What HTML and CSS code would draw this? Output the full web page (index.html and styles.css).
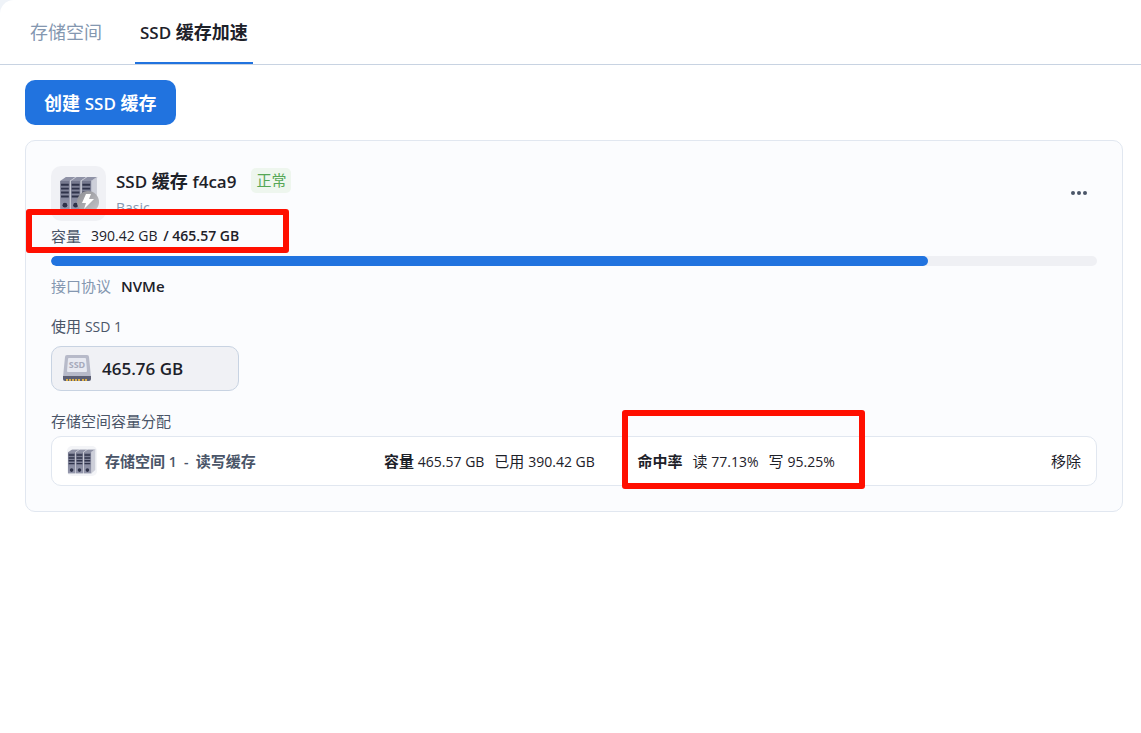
FILE: index.html
```html
<!DOCTYPE html>
<html lang="zh-CN">
<head>
    <meta charset="UTF-8">
    <meta name="viewport" content="width=device-width, initial-scale=1.0">
    <title>SSD 缓存加速</title>
    <link rel="stylesheet" href="styles.css">
</head>
<body>

<!-- shared server drawing -->
<svg class="defs" width="0" height="0" aria-hidden="true">
    <defs>
        <linearGradient id="front" x1="0" y1="0" x2="0" y2="1">
            <stop offset="0" stop-color="#75788e"/>
            <stop offset="1" stop-color="#9497ac"/>
        </linearGradient>
        <linearGradient id="flash" x1="0" y1="0" x2="1" y2="1">
            <stop offset="0" stop-color="#8e8e93"/>
            <stop offset="1" stop-color="#c6c6ca"/>
        </linearGradient>
        <symbol id="tower" viewBox="0 0 17 34">
            <path d="M0 4L6 0H16L10 4Z" fill="#8f92a6"/>
            <path d="M10 4L16 0H17L11 4V34H10Z" fill="#c3c5d1"/>
            <path d="M0 4H10V34H0Z" fill="url(#front)"/>
            <path d="M1 8H9M1 12H9M1 16H9M1 20H9" stroke="#2f334a" stroke-width="2"/>
            <circle cx="5" cy="29" r="2.500" fill="#2f334a"/>
        </symbol>
        <symbol id="server" viewBox="0 0 39 34">
            <path d="M32 4L38 0V29L32 34Z" fill="#cdcfd9"/>
            <use href="#tower" x="0" y="0" width="17" height="34"/>
            <use href="#tower" x="11" y="0" width="17" height="34"/>
            <use href="#tower" x="22" y="0" width="17" height="34"/>
        </symbol>
    </defs>
</svg>

<div class="panel">
    <nav class="tabs">
        <a class="tab" href="#storage">存储空间</a>
        <a class="tab active" href="#cache"><span class="latin">SSD</span> 缓存加速</a>
    </nav>

    <main class="content">
        <button class="create" type="button">创建 <span class="latin">SSD</span> 缓存</button>

        <section class="card">
            <div class="head">
                <div class="cache-icon">
                    <svg viewBox="0 0 55 55" aria-hidden="true">
                        <use href="#server" x="9" y="11" width="38" height="33"/>
                        <circle cx="37" cy="36" r="11" fill="url(#flash)"/>
                        <path d="M35 28H40L38 33H43L33 43L35 37H31Z" fill="#fff"/>
                    </svg>
                </div>
                <div class="head-text">
                    <div class="title-line">
                        <h2><span class="latin">SSD</span> 缓存 <span class="latin">f4ca9</span></h2>
                        <span class="status">正常</span>
                    </div>
                    <p class="mode">Basic</p>
                </div>
                <button class="more" type="button" aria-label="更多">
                    <svg viewBox="0 0 16 4" width="16" height="4" aria-hidden="true">
                        <circle cx="2" cy="2" r="2"/>
                        <circle cx="8" cy="2" r="2"/>
                        <circle cx="14" cy="2" r="2"/>
                    </svg>
                </button>
            </div>

            <div class="capacity">
                <label for="usage">容量</label>
                <span class="num">390.42 GB <b class="total">/ 465.57 GB</b></span>
                <span class="mark mark-capacity"></span>
            </div>
            <progress id="usage" value="390.42" max="465.57"></progress>

            <div class="protocol">
                <span class="muted">接口协议</span>
                <b>NVMe</b>
            </div>

            <h3 class="label">使用 <span class="num">SSD 1</span></h3>
            <div class="disk">
                <svg viewBox="0 0 28 28" width="28" height="28" aria-hidden="true">
                    <path d="M4 0H24Q26 0 26 2L28 22H0L2 2Q2 0 4 0Z" fill="#b7bac9"/>
                    <path d="M0 21H28V24Q28 26 26 26H2Q0 26 0 24Z" fill="#5c5f74"/>
                    <path d="M6 3H22Q23 3 23 4L24 16Q24 17 23 17H5Q4 17 4 16L5 4Q5 3 6 3Z" fill="#e7e9f1"/>
                    <path d="M3 25H17M19 25H25" stroke="#e0b24a" stroke-width="2" stroke-dasharray="2 1"/>
                    <text x="14" y="13" text-anchor="middle" class="disk-text">SSD</text>
                </svg>
                <b>465.76 GB</b>
            </div>

            <h3 class="label">存储空间容量分配</h3>
            <div class="volume">
                <div class="volume-name">
                    <span class="volume-icon">
                        <svg viewBox="0 0 39 34" width="28" height="25" aria-hidden="true"><use href="#server"/></svg>
                    </span>
                    <b>存储空间<span class="num"> 1&nbsp; -&nbsp; </span>读写缓存</b>
                </div>
                <div class="stats">
                    <span><b>容量</b> <span class="num">465.57 GB</span></span>
                    <span>已用 <span class="num">390.42 GB</span></span>
                </div>
                <div class="stats">
                    <b>命中率</b>
                    <span>读 <span class="num">77.13%</span></span>
                    <span>写 <span class="num">95.25%</span></span>
                    <span class="mark mark-hit"></span>
                </div>
                <button class="remove" type="button">移除</button>
            </div>
        </section>
    </main>
</div>

</body>
</html>
```

FILE: styles.css
```css
* {
    box-sizing: border-box;
}
body {
    margin: 0;
    background: #eff3f8;
    color: #1d2129;
    font-family: "Open Sans", "Noto Sans CJK SC", sans-serif;
    font-size: 15px;
    line-height: 20px;
}
h2, h3, p {
    margin: 0;
}
b {
    font-weight: 600;
}
button {
    font: inherit;
    border: 0;
    cursor: pointer;
}
.defs {
    position: absolute;
}
.panel {
    min-height: 100vh;
    background: #fff;
    border-top-left-radius: 14px;
}

/* latin text and digits run a size smaller than the Chinese around them */
.num {
    font-size: 14px;
}
.latin {
    font-size: 17px;
}
.label .num, .stats .num, .volume-name .num, .latin {
    line-height: 1;
}

/* tabs */
.tabs {
    display: flex;
    gap: 28px;
    padding: 0 25px;
    border-bottom: 1px solid #c8d3e2;
}
.tab {
    padding: 20px 5px 18px;
    border-bottom: 2px solid transparent;
    font-size: 18px;
    line-height: 24px;
    color: #8497b0;
    text-decoration: none;
}
.tab.active {
    border-color: #2173df;
    color: #1d2129;
    font-weight: 600;
}

.content {
    padding: 15px 18px 25px 25px;
}
.create {
    display: block;
    height: 45px;
    padding: 0 19px;
    border-radius: 10px;
    background: #2173df;
    color: #fff;
    font-size: 18px;
    font-weight: 600;
}

/* cache card */
.card {
    margin-top: 15px;
    padding: 25px;
    border: 1px solid #e1e7f0;
    border-radius: 10px;
    background: #fbfcfe;
}
.head {
    display: flex;
    gap: 10px;
}
.cache-icon {
    width: 55px;
    height: 55px;
    border-radius: 10px;
    background: #f0f1f5;
}
.head-text {
    flex: 1;
    padding-top: 2px;
}
.title-line {
    display: flex;
    align-items: center;
    gap: 15px;
}
.title-line h2 {
    font-size: 18px;
    font-weight: 600;
}
.status {
    padding: 2px 5px;
    border-radius: 5px;
    background: #eef6ee;
    color: #55a755;
    line-height: 21px;
}
.mode {
    margin-top: 5px;
    color: #8497b0;
    font-size: 14px;
}
.more {
    align-self: flex-start;
    margin-top: 15px;
    padding: 10px;
    background: none;
    line-height: 0;
    fill: #4a5568;
}
.more svg {
    display: block;
}
.capacity, .protocol {
    position: relative;
    display: flex;
    gap: 10px;
}
.capacity {
    margin-top: 5px;
}
.capacity label, .label {
    color: #4a5568;
}
.total {
    margin-left: 2px;
}
.muted {
    color: #8497b0;
}
progress {
    display: block;
    appearance: none;
    width: 100%;
    height: 10px;
    margin: 10px 0;
    border: 0;
    border-radius: 5px;
    background: #eff0f4;
    overflow: hidden;
}
progress::-webkit-progress-bar {
    background: #eff0f4;
}
progress::-webkit-progress-value {
    border-radius: 5px;
    background: #2173df;
}
.label {
    margin-top: 20px;
    font-size: 15px;
    font-weight: 400;
}
.disk {
    display: flex;
    align-items: center;
    gap: 11px;
    width: 188px;
    height: 45px;
    margin-top: 10px;
    padding: 0 11px;
    border: 1px solid #c8d3e2;
    border-radius: 10px;
    background: #f0f1f5;
    font-size: 17px;
}
.disk-text {
    fill: #a6a9bb;
    font-size: 9px;
    font-weight: 700;
}

/* volume row */
.volume {
    display: grid;
    grid-template-columns: 5fr 4fr 5fr 2fr;
    align-items: center;
    height: 50px;
    margin-top: 5px;
    padding: 0 15px;
    border: 1px solid #e1e7f0;
    border-radius: 10px;
    background: #fff;
}
.volume-name {
    display: flex;
    align-items: center;
    gap: 8px;
    color: #4a5568;
}
.volume-icon {
    display: flex;
    align-items: center;
    justify-content: center;
    width: 30px;
    height: 30px;
    border-radius: 5px;
    background: #f3f4f7;
}
.stats {
    position: relative;
    display: flex;
    gap: 10px;
    white-space: nowrap;
}
.remove {
    justify-self: end;
    padding: 0;
    background: none;
    color: #1d2129;
}

/* red highlight frames */
.mark {
    position: absolute;
    border: 6px solid #ff0f00;
    border-radius: 3px;
    pointer-events: none;
}
.mark-capacity {
    left: -25px;
    top: -17px;
    width: 263px;
    height: 44px;
}
.mark-hit {
    left: -15px;
    top: -41px;
    width: 243px;
    height: 79px;
}
```
